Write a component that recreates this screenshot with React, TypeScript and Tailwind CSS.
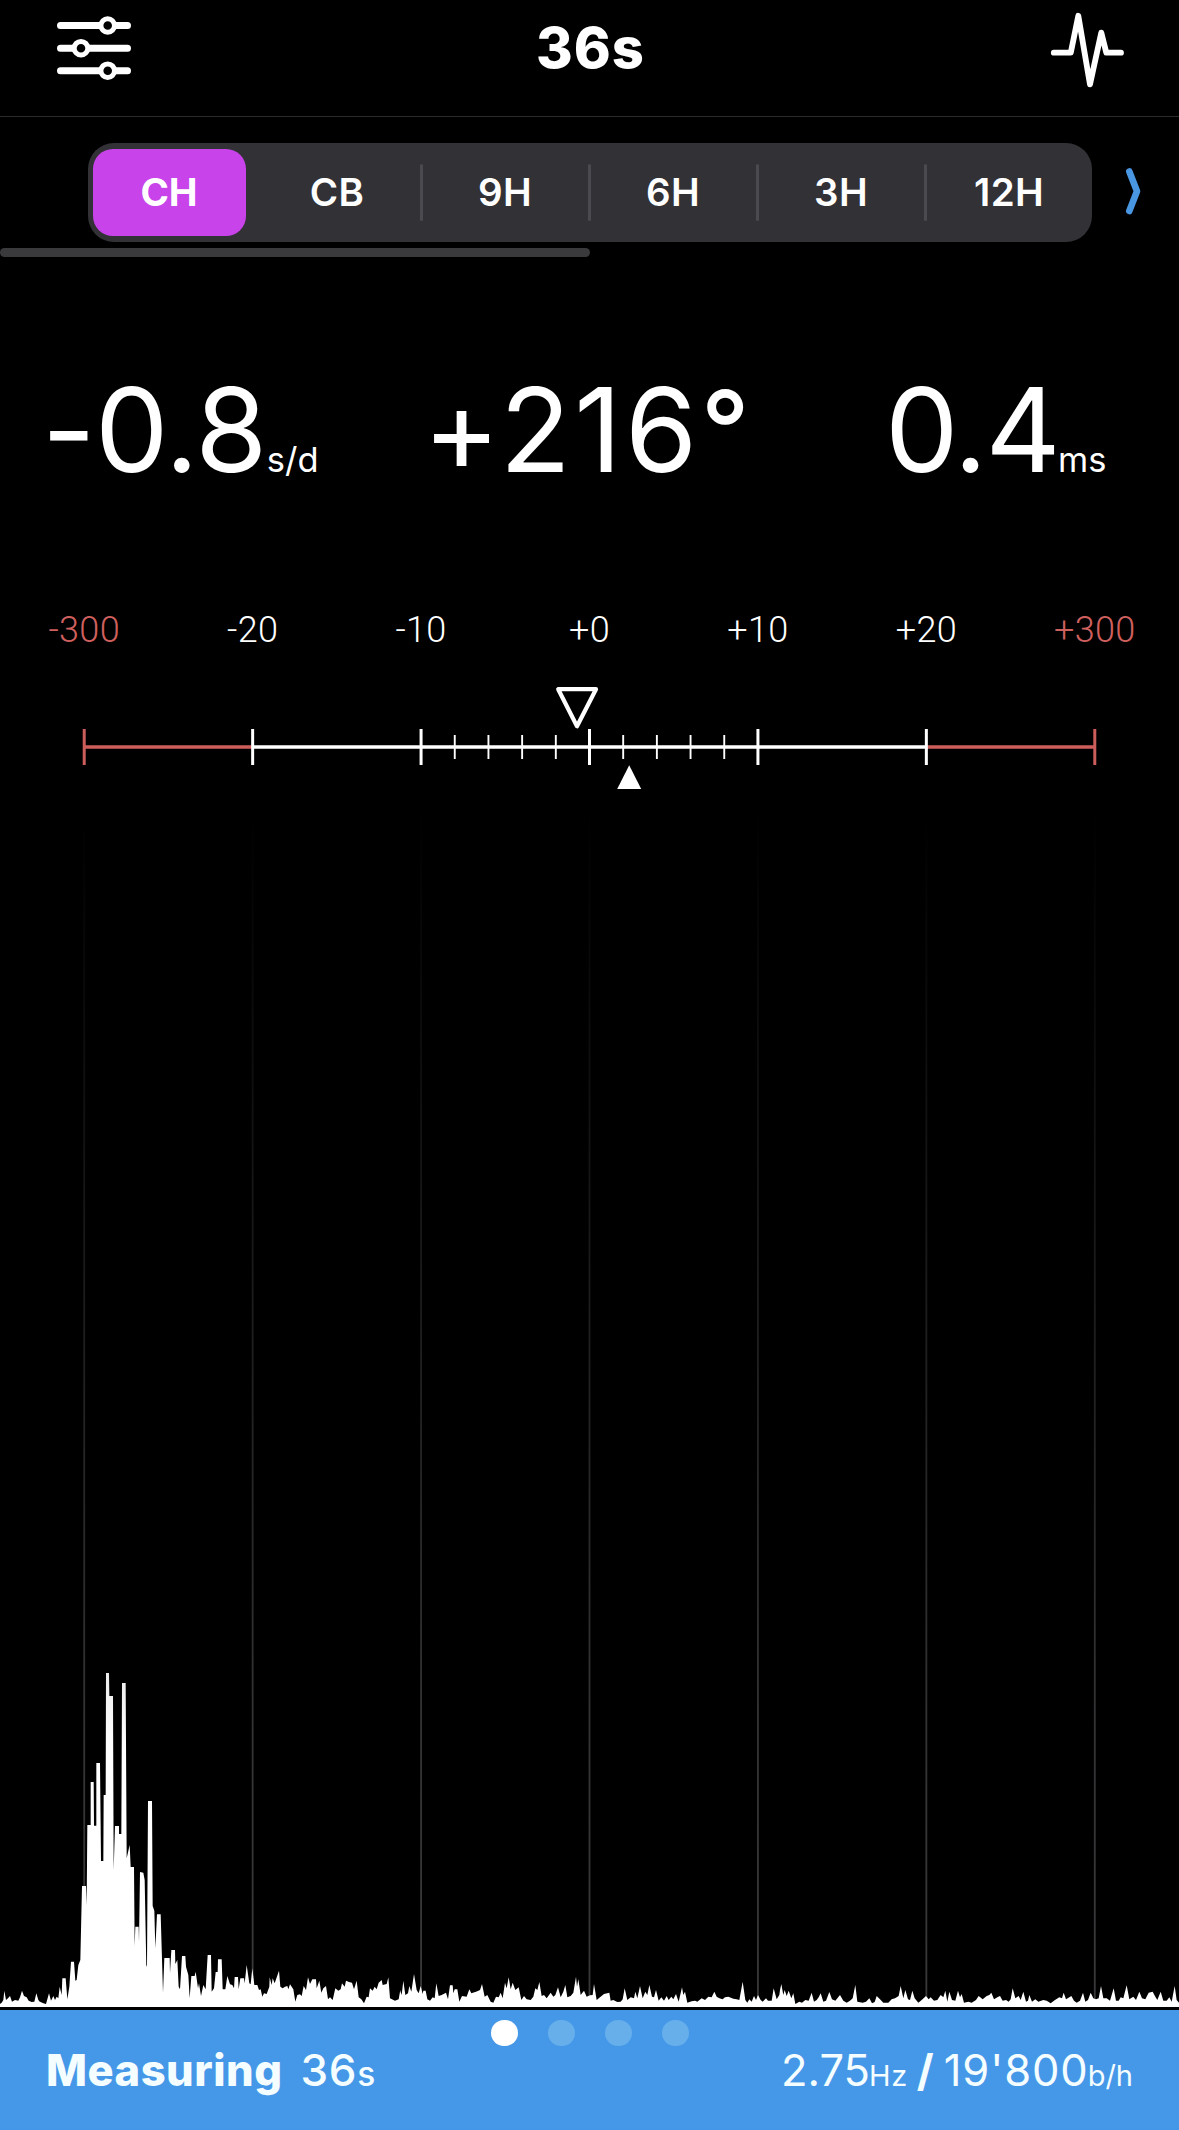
import React from "react";

const POSITIONS = ["CH", "CB", "9H", "6H", "3H", "12H"];

const SCALE_LABELS = [
  { text: "-300", out: true },
  { text: "-20", out: false },
  { text: "-10", out: false },
  { text: "+0", out: false },
  { text: "+10", out: false },
  { text: "+20", out: false },
  { text: "+300", out: true },
];

const COLUMN = 1179 / 7;
const TICKS = [0, 1, 2, 3, 4, 5, 6].map((i) => COLUMN * (i + 0.5));
const MINOR = [-4, -3, -2, -1, 1, 2, 3, 4].map((i) => 589.5 + (COLUMN / 5) * i);

// Signal level samples, in thirds of a pixel, one block for each stretch of the trace.
const NOISE_LEFT =
  "0,132 5,128 10,120 13,92 18,120 24,115 30,108 36,125 45,120 55,122 60,112 66,92 72,108 80,112 86,122 95,126 103,125 109,100 115,120 120,126";
const BURST =
  "0,1055 10,1060 18,1062 27,1030 33,1052 40,1038 45,1050 50,1040 55,1045 59,1010 65,1035 67,985 77,985 82,1048 88,1010 93,935 102,935 106,992 110,990 115,945 121,930 126,708 138,708 140,765 142,525 152,525 152,396 161,396 162,527 169,527 169,339 180,339 183,633 190,633 191,435 197,435 198,69 207,69 208,138 219,138 221,660 225,528 237,528 237,552 244,552 246,99 257,99 260,625 269,585 272,651 282,651 284,888 286,830 296,830 297,875 300,666 310,668 314,690 319,950 321,945 324,453 336,453 338,768 343,782 346,895 351,793 362,793 369,1028 373,924 389,924 390,970 394,900 405,900 406,942 412,930 416,1010 420,1018 426,918 436,918 438,950 445,975 449,1045 454,978 464,978 467,965 474,1015 477,1000 483,1038 490,1005 497,1018 503,915 513,915 515,1025 522,1015 527,966 533,966 534,928 545,928 548,1018 556,1018 562,978 570,1003 577,1005 582,1015 584,981 594,981 596,1018 601,985 612,985 614,1000 620,945 628,1000 632,1003 637,955 643,1005 652,1005 657,1020 662,1018 667,1040 672,1030 680,1032 688,1010 689,982 695,1005 698,985 704,1000 717,962 721,1010 728,1015 735,1010 742,1008 745,1018 750,1003 760,1018 766,1055 772,1035 780,1033";
const NOISE_A =
  "900,103 905,108 911,78 918,90 924,52 930,72 937,58 948,58 950,85 958,62 964,98 970,85 978,78 984,118 990,112 998,120 1006,85 1015,92 1022,88 1026,70 1034,80 1038,62 1047,66 1056,68 1062,88 1070,62 1076,112 1084,118 1092,130 1100,110 1106,112 1110,85 1118,92 1124,80 1130,88 1136,68 1145,60 1148,75 1160,72 1165,52 1170,115 1185,122 1196,118 1200,95";
const NOISE_B =
  "0,90 5,105 10,62 16,105 24,100 28,78 34,95 42,42 50,90 56,100 62,78 68,102 70,92 77,92 82,118 90,122 98,112 104,115 109,70 116,108 125,105 138,98 144,118 150,76 158,76 160,100 164,88 172,88 178,125 186,108 200,110 208,88 214,100 228,95 240,90 246,72 254,110 262,105 272,125 280,128 288,110 296,112 302,98 308,115 315,68 320,85 326,52 332,88 338,68 346,90 356,82 364,120 372,108 380,118 392,120 400,110 406,85 412,90 418,66 425,108 432,105 440,115 452,98 460,110 466,105 474,82 482,112 490,95 496,75 502,112 512,108 520,98 528,50 531,80 535,58 542,105 552,92 560,110 570,106 578,105 582,72 590,120 600,112 612,102 628,98 632,122 640,120 652,126 662,125 668,118 674,85 682,120 692,112 702,115 706,95 712,115 720,78 728,115 736,95 742,105 748,75 756,110 762,112 768,90 776,122 784,112 792,122 800,108 806,120 814,110 820,118 828,102 836,125 846,82 850,105 855,95 862,128 875,124 885,122 892,125 905,115 915,120 925,110 935,112 943,95 950,110 958,115 968,118 975,112 985,110 1000,116 1010,118 1018,120 1028,65 1036,120 1042,128 1048,118 1055,125 1062,108 1068,120 1074,105 1082,120 1088,125 1098,115 1104,122 1115,122 1121,85 1130,118 1138,105 1140,90";
const NOISE_C =
  "0,90 4,72 10,105 14,90 20,108 26,92 34,115 40,100 46,132 58,125 66,128 76,120 86,122 95,98 102,125 110,120 116,112 122,100 130,125 138,122 148,96 156,118 166,122 180,105 190,122 200,128 210,122 218,115 226,75 232,125 248,128 258,125 268,115 276,130 284,126 290,108 300,118 310,128 325,128 335,118 345,115 356,108 362,78 370,115 376,90 384,118 390,120 397,92 404,115 415,128 425,120 438,108 446,118 452,112 462,122 472,120 482,105 490,112 496,92 502,125 508,95 516,120 526,122 534,92 540,112 545,102 552,128 565,125 575,128 588,120 596,108 608,118 620,108 628,105 634,98 642,118 652,112 660,108 668,122 678,120 686,125 692,118 698,85 706,115 716,108 722,120 730,95 738,125 744,122 748,105 756,125 766,118 775,125 790,120 800,122 812,130 825,120 838,112 846,115 851,98 858,118 868,112 874,108 882,122 890,128 900,122 909,98 916,125 924,120 932,98 940,115 948,118 956,115 963,78 970,115 980,115 990,122 1001,85 1008,122 1016,122 1022,112 1030,115 1040,76 1048,118 1060,110 1068,120 1078,95 1086,115 1096,118 1106,98 1118,95 1126,110 1132,120 1142,95 1150,122 1160,122 1168,112 1175,125 1184,78 1190,120 1197,128";

function parse(block: string, dx: number, dy: number) {
  return block.split(" ").map((pair) => {
    const [x, y] = pair.split(",").map(Number);
    return `${(dx + x / 3).toFixed(2)},${(dy + y / 3).toFixed(2)}`;
  });
}

// The chart begins 800px below the page's top edge and is 1210px tall.
const TRACE = [
  "0,1207",
  ...parse(NOISE_LEFT, 0, 1160),
  ...parse(BURST, 40, 850),
  ...parse(NOISE_A, 0, 1160),
  ...parse(NOISE_B, 400, 1160),
  ...parse(NOISE_C, 780, 1160),
  "1179,1207",
].join(" ");

function Header() {
  return (
    <header className="flex h-[117px] shrink-0 items-start justify-between border-b border-[#2b2b2b] pl-[56px] pr-[54px]">
      <svg className="mt-[15px]" width="76" height="66" viewBox="0 0 76 66" fill="none">
        <g stroke="#fff" strokeWidth="7" strokeLinecap="round">
          <path d="M4.5 10.5H71.5M4.5 33.2H71.5M4.5 55.7H71.5" />
        </g>
        <g fill="#000" stroke="#fff" strokeWidth="5">
          <circle cx="51.7" cy="10.5" r="6.8" />
          <circle cx="25" cy="33.2" r="6.8" />
          <circle cx="51.7" cy="55.7" r="6.8" />
        </g>
      </svg>
      <h1 className="mt-[20px] text-[56px] leading-none font-extrabold tracking-[1px]">36s</h1>
      <svg className="mt-[10px]" width="76" height="80" viewBox="0 0 76 80" fill="none">
        <path
          d="M4.8 42.7H21.8L29.3 5.8L41 74.4L52.3 22.6L57.3 42.7H72"
          stroke="#fff"
          strokeWidth="5.8"
          strokeLinecap="round"
          strokeLinejoin="round"
        />
      </svg>
    </header>
  );
}

function PositionTabs() {
  return (
    <div className="h-[140px] shrink-0">
      <div className="flex h-[131px] items-start pt-[26px] pl-[87.5px]">
        <div className="h-[99px] w-[1004px] rounded-[26px] bg-[#323136]">
          <div className="-mx-[2px] flex h-full items-center">
            {POSITIONS.map((p, i) => (
              <div key={p} className="relative flex h-full w-[168px] items-center justify-center">
                {i === 0 && <div className="absolute inset-x-[7.5px] inset-y-[6px] rounded-[20px] bg-[#c843ea]" />}
                {i > 1 && <div className="absolute top-[21px] -left-[1.5px] h-[57px] w-[3px] rounded-full bg-[#4b4a50]" />}
                <span
                  className={
                    i === 0
                      ? "relative -left-[0.5px] text-[38.5px] leading-none font-bold"
                      : "relative -left-[0.5px] text-[38.5px] leading-none font-semibold tracking-[0.3px]"
                  }
                >
                  {p}
                </span>
              </div>
            ))}
          </div>
        </div>
        <svg className="mt-[24px] ml-[30.5px]" width="24" height="50" viewBox="0 0 24 50" fill="none">
          <path d="M7.3 4.5L15 24.3L7.3 44" stroke="#4997e2" strokeWidth="6.6" strokeLinecap="round" strokeLinejoin="round" />
        </svg>
      </div>
      <div className="h-[9px] w-[590px] rounded-full bg-[#3a3a3c]" />
    </div>
  );
}

function Readings() {
  return (
    <div className="flex h-[354px] shrink-0 items-start pt-[115px] whitespace-nowrap">
      <div className="flex w-[423px] items-baseline pl-[42px]">
        <span className="text-[116.5px] leading-none tracking-[-0.6px]">-0.8</span>
        <span className="text-[34.5px] leading-none">s/d</span>
      </div>
      <div className="flex w-[462px] items-baseline">
        <span className="text-[116.5px] leading-none tracking-[3.5px]">+216</span>
        <span className="relative -top-[5px] text-[107px] leading-none font-medium">°</span>
      </div>
      <div className="flex items-baseline">
        <span className="text-[116.5px] leading-none tracking-[-1.8px]">0.4</span>
        <span className="-ml-[1px] text-[34.5px] leading-none">ms</span>
      </div>
    </div>
  );
}

function RateScale() {
  return (
    <div className="h-[189px] shrink-0 pt-px">
      <div className="grid grid-cols-7 text-center font-[Roboto,sans-serif] text-[36px] leading-none font-light tracking-[0.3px]">
        {SCALE_LABELS.map((l) => (
          <span key={l.text} className={l.out ? "text-[#d0605e]" : "text-white"}>
            {l.text}
          </span>
        ))}
      </div>
      <svg className="mt-[32px] block" width="1179" height="120" viewBox="0 680 1179 120" fill="none">
        <path d="M84.2 747H252.6M926.4 747H1094.8" stroke="#cb5d5b" strokeWidth="3.6" />
        <path d="M252.6 747H926.4" stroke="#fff" strokeWidth="3.4" />
        {MINOR.map((x) => (
          <path key={x} d={`M${x} 735V759`} stroke="#fff" strokeWidth="1.9" />
        ))}
        {TICKS.map((x, i) => (
          <path key={x} d={`M${x} 729V765`} stroke={i === 0 || i === 6 ? "#cb5d5b" : "#fff"} strokeWidth="3" />
        ))}
        <path d="M558.2 689.2H596L577 726.2Z" stroke="#fff" strokeWidth="4.2" strokeLinejoin="round" />
        <path d="M617.2 789L629.2 765.3L641.2 789Z" fill="#fff" />
      </svg>
    </div>
  );
}

function Spectrum() {
  return (
    <svg className="block shrink-0" width="1179" height="1210" viewBox="0 0 1179 1210">
      <defs>
        <linearGradient id="fade" x1="0" y1="0" x2="0" y2="1">
          <stop offset="0" stopColor="#333335" stopOpacity="0" />
          <stop offset="0.75" stopColor="#333335" />
          <stop offset="1" stopColor="#39393b" />
        </linearGradient>
        <linearGradient id="signal" gradientUnits="userSpaceOnUse" x1="0" y1="870" x2="0" y2="950">
          <stop offset="0" stopColor="#ececec" />
          <stop offset="1" stopColor="#fff" />
        </linearGradient>
      </defs>
      {TICKS.map((x) => (
        <rect key={x} x={x - 0.9} y="5" width="1.8" height="1200" fill="url(#fade)" />
      ))}
      <polygon points={TRACE} fill="url(#signal)" />
    </svg>
  );
}

function StatusBar() {
  return (
    <footer className="relative h-[120px] shrink-0 bg-[#4598e8] text-[#f4fdff]">
      <div className="absolute top-[9.5px] left-[491.3px] flex gap-[30.4px]">
        <i className="size-[26.6px] rounded-full bg-white" />
        <i className="size-[26.6px] rounded-full bg-[#66afeb]" />
        <i className="size-[26.6px] rounded-full bg-[#66afeb]" />
        <i className="size-[26.6px] rounded-full bg-[#66afeb]" />
      </div>
      <div className="flex items-baseline justify-between pt-[38.4px] pr-[46px] pl-[46px] whitespace-nowrap">
        <div className="flex items-baseline">
          <span className="text-[43.5px] leading-none font-extrabold tracking-[0.5px]">Measuring</span>
          <span className="ml-[18px] text-[44px] leading-none font-medium tracking-[0.8px]">36</span>
          <span className="text-[33.5px] leading-none font-medium">s</span>
        </div>
        <div className="flex items-baseline">
          <span className="text-[43.5px] leading-none">2.75</span>
          <span className="-ml-[1px] text-[29px] leading-none tracking-[0.6px]">Hz</span>
          <span className="ml-[9px] text-[43.5px] leading-none font-bold">/</span>
          <span className="ml-[10px] text-[43.5px] leading-none tracking-[0.9px]">19'800</span>
          <span className="-ml-[1px] text-[29px] leading-none">b/h</span>
        </div>
      </div>
    </footer>
  );
}

export default function App() {
  return (
    <div className="flex h-[2130px] w-[1179px] flex-col overflow-hidden bg-black font-[Inter,sans-serif] text-white">
      <Header />
      <PositionTabs />
      <Readings />
      <RateScale />
      <Spectrum />
      <StatusBar />
    </div>
  );
}
